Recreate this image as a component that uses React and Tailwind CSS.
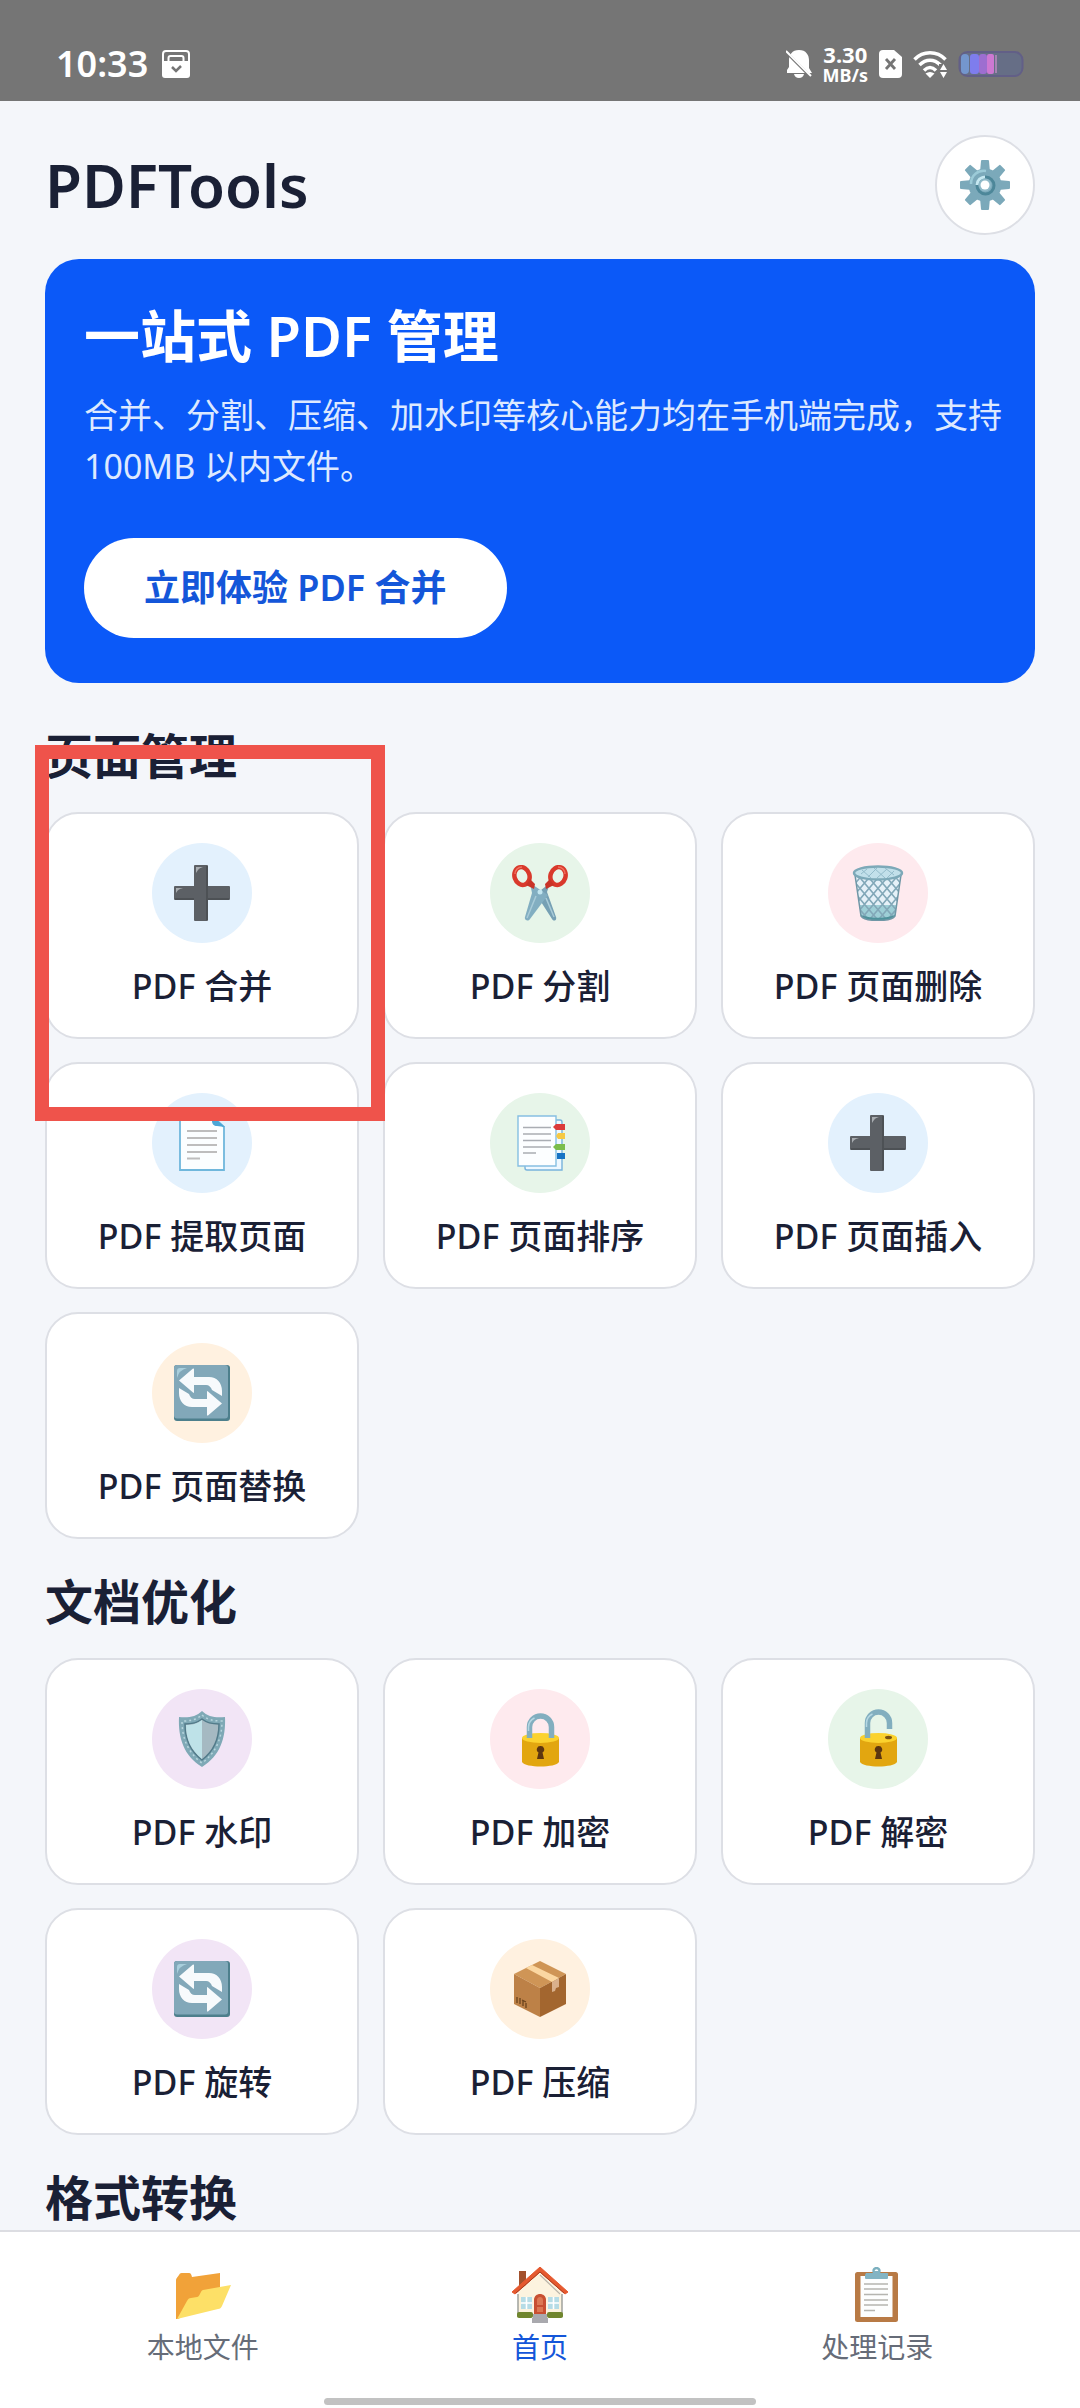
import React, { useState } from "react";

const PlusIcon = () => (
  <svg viewBox="0 0 56 56" className="size-14" aria-hidden="true">
    <path d="M21 0h12a1 1 0 0 1 1 1v20h21a1 1 0 0 1 1 1v12a1 1 0 0 1-1 1H34v20a1 1 0 0 1-1 1H21a1 1 0 0 1-1-1V35H1a1 1 0 0 1-1-1V22a1 1 0 0 1 1-1h19V1a1 1 0 0 1 1-1z" fill="#5c6065" />
    <path d="M33 1v54M1 34h19M34 34h21" stroke="#4d5155" strokeWidth="2" />
    <path d="M22 8V2h7c-4 1-5 3-7 6zM2 28v-5h7c-4 1-5 2-7 5z" fill="#a9adb1" />
  </svg>
);

const ScissorsIcon = () => (
  <svg viewBox="0 0 56 56" className="size-14" aria-hidden="true">
    <path d="M38 18 24 29 40 54c2 3 5 1 4-2L35 27z" fill="#76a0b4" />
    <path d="M18 18 36 30 18 54c-2 3-6 1-5-2l7-24z" fill="#82aec1" />
    <path d="M24 31 15 53M34 33l8 19" stroke="#a8cbd8" strokeWidth="1.500" />
    <g fill="none" stroke="#d9392c" strokeWidth="4.500">
      <ellipse cx="10" cy="11" rx="7.500" ry="9" transform="rotate(-18 10 11)" />
      <ellipse cx="46" cy="11" rx="7.500" ry="9" transform="rotate(18 46 11)" />
    </g>
    <path d="m14 20 8 4 1-5-5-5zM42 20l-8 4-1-5 5-5z" fill="#c93327" />
    <path d="M3 9c0-4 3-7 7-7M53 9c0-4-3-7-7-7" stroke="#f2705f" strokeWidth="1.500" fill="none" />
    <circle cx="28" cy="27" r="2.500" fill="#c3e6f0" />
  </svg>
);

const TrashIcon = () => (
  <svg viewBox="0 0 56 56" className="size-14" aria-hidden="true">
    <defs>
      <clipPath id="bin">
        <path d="M5 10 11 51c4 6 30 6 34 0l6-41z" />
      </clipPath>
    </defs>
    <path d="M5 10 11 51c4 6 30 6 34 0l6-41z" fill="#e5f1f8" />
    <g clipPath="url(#bin)">
      <path d="M8 40h40v18H8z" fill="#62b1b9" opacity="0.55" />
      <path
        d="M-30 8 14 60M-21 8 23 60M-12 8 32 60M-3 8 41 60M6 8 50 60M15 8 59 60M24 8 68 60M33 8 77 60M42 8 86 60M86 8 42 60M77 8 33 60M68 8 24 60M59 8 15 60M50 8 6 60M41 8-3 60M32 8-12 60M23 8-21 60M14 8-30 60"
        stroke="#82a8b8"
        strokeWidth="1.600"
      />
      <path d="M10 49c6 5 30 5 36 0v9H10z" fill="#4e929b" />
    </g>
    <path d="M5 10 11 51c4 6 30 6 34 0l6-41" fill="none" stroke="#7097a6" strokeWidth="1.500" />
    <ellipse cx="28" cy="8" rx="24" ry="6.500" fill="#c2e0ea" stroke="#7da9b8" strokeWidth="2.500" />
    <path d="M11 9 17 4M18 12 27 3M27 13 37 4M37 13 44 6M12 5l9 8M24 3l11 10M35 3l9 7" stroke="#94bccb" />
  </svg>
);

const PageIcon = () => (
  <svg viewBox="0 0 56 56" className="size-14" aria-hidden="true">
    <path d="M6 1h32l12 11v43H6z" fill="#fbfeff" stroke="#6fb7dc" strokeWidth="1.800" />
    <path d="M38 1v5c0 3 2 5 5 5l8 1z" fill="#4ba6d6" />
    <path d="M13 16h30M13 23h30M13 30h30M13 37h30M13 43.500h13" stroke="#bdbdbd" strokeWidth="1.800" />
  </svg>
);

const TabsIcon = () => (
  <svg viewBox="0 0 56 56" className="size-14" aria-hidden="true">
    <path d="M13 5h35q2 0 2 2v48H15q-2 0-2-2z" fill="#eef8ff" stroke="#78b3dc" strokeWidth="1.400" />
    <path d="M6 1h38v50H6z" fill="#fcfeff" stroke="#86bfe2" strokeWidth="1.400" />
    <path d="M11 12.500h28M11 19h28M11 25.500h28M11 32h28M11 38h13" stroke="#a9adb3" strokeWidth="1.400" />
    <path d="m41 12 3-3h9v6h-9z" fill="#db3b3b" />
    <path d="m44 21 2-3h7v6h-7z" fill="#f6c944" />
    <path d="m41 32 3-3h9v6h-9z" fill="#7bbd4b" />
    <path d="M45 38h8v6h-8z" fill="#1673c4" />
  </svg>
);

const swapArrow = "M5 15.500 19 3.500q1-.5 1 1V12h15c8 0 13 6 13 14v5L38 25c-1-3-3-5-6-5H20v7q0 1.500-1 .5z";

const SwapIcon = () => (
  <svg viewBox="0 0 56 56" className="size-14" aria-hidden="true">
    <rect width="56" height="56" rx="3" fill="#4d7f8c" />
    <rect width="54" height="53.500" rx="3" fill="#82a8b9" />
    <path d="M3 13V6q0-3 3-3h7Q5 5 3 13z" fill="#a9cfdc" />
    <path d={swapArrow} fill="#f7fafc" />
    <path d={swapArrow} fill="#f7fafc" transform="rotate(180 26.500 27)" />
  </svg>
);

const ShieldIcon = () => (
  <svg viewBox="0 0 56 56" className="size-14" aria-hidden="true">
    <path d="M28 0c6 6 14 7 23 6 1 21-5 39-23 50C10 45 4 27 5 6c9 1 17 0 23-6z" fill="#7fa9b6" />
    <path d="M28 4c6 5 12 6 20 6 0 17-6 32-20 42C14 42 8 27 8 10c8 0 14-1 20-6z" fill="none" stroke="#b7d5dd" strokeWidth="1.500" strokeDasharray="2 3" />
    <path d="M28 8c5 4 11 5 17 5 0 15-5 27-17 36C16 40 11 28 11 13c6 0 12-1 17-5z" fill="#a5b9c2" stroke="#527b8a" strokeWidth="1.500" />
    <path d="M28 9c-5 4-10 5-16 5 0 14 5 25 16 34z" fill="#bee2e8" />
  </svg>
);

const LockIcon = ({ open }) => (
  <svg viewBox="0 0 56 56" className="size-14 overflow-visible" aria-hidden="true">
    <path d="M10 27v24c3 6 34 6 37 0V27z" fill="#e2a610" />
    <ellipse cx="28.500" cy="27" rx="18.500" ry="5" fill="#fbd22e" />
    {open ? (
      <>
        <ellipse cx="38.500" cy="26.500" rx="3.500" ry="1.800" fill="#7a5210" />
        <path d="M17.500 27V12a11 11 0 0 1 22 0v6" fill="none" stroke="#82aebf" strokeWidth="5.500" />
        <path d="M16.500 16v-4c0-4 2-7 6-9" fill="none" stroke="#b5d7e3" strokeWidth="1.500" />
      </>
    ) : (
      <>
        <path d="M17.500 27V16a11 11 0 0 1 22 0v11" fill="none" stroke="#82aebf" strokeWidth="5.500" />
        <path d="M16.500 20v-4c0-4 2-7 6-9" fill="none" stroke="#b5d7e3" strokeWidth="1.500" />
      </>
    )}
    <path d="M28.500 35a3.500 3.500 0 0 1 2 6.500L32 48h-7l1.500-6.500a3.500 3.500 0 0 1 2-6.500z" fill="#5c3510" />
  </svg>
);

const PackageIcon = () => (
  <svg viewBox="0 0 56 56" className="size-14" aria-hidden="true">
    <path d="M28 0 54 13 28 27 2 13z" fill="#cf9556" />
    <path d="M2 13 28 27v29L2 43z" fill="#bd8147" />
    <path d="M54 13 28 27v29l26-13z" fill="#a3662f" />
    <path d="m14 7 6-3 27 13-7 4z" fill="#fbd7a1" />
    <path d="m40 21 7-4v9l-3 1-1 3-3 1z" fill="#d9b08c" />
    <path d="M5 36v6M8 37v6M11 40v5M10 39l4 2M14 42v5" stroke="#6b421c" strokeWidth="1.300" />
  </svg>
);

const FolderIcon = () => (
  <svg viewBox="0 0 56 56" className="size-14" aria-hidden="true">
    <path d="M1 52V13c0-2 2-3 3-5s2-2 4-2h6c2 0 2 1 3 4l28-4v22L3 52z" fill="#f1a239" />
    <path d="m2 52 10-18c1-2 2-3 4-3l6-1c3 0 3-6 6-7l28-5-9 21c-1 2-2 3-4 3z" fill="#fde067" />
  </svg>
);

const HouseIcon = () => (
  <svg viewBox="0 0 56 56" className="size-14" aria-hidden="true">
    <path d="M7 4h7v17H7z" fill="#a2512d" />
    <path d="M6 25 28 5l22 20v25H6z" fill="#fcf3df" />
    <path d="M6 27v23M50 27v23" stroke="#9a9c97" strokeWidth="1.400" />
    <path d="m28 8 20 19" stroke="#b9b4aa" strokeWidth="1.200" />
    <path d="M28 0 56 25l-3 2L28 5 3 27l-3-2z" fill="#e5592f" stroke="#e5592f" strokeLinejoin="round" />
    <path d="M4 26 28 5l24 21" fill="none" stroke="#a83c1e" />
    <path d="M22 47V33c0-8 12-8 12 0v14z" fill="#c84f31" />
    <path d="M25 38v-5c0-4 6-4 6 0v5zM25 40h6v5h-6z" fill="#dc7854" />
    <path d="M9 30h11v12H9zM36 30h11v12H36z" fill="#b5dce6" />
    <path d="M14.500 30v12M9 36h11M41.500 30v12M36 36h11" stroke="#fff" strokeWidth="1.600" />
    <rect x="5" y="45" width="16" height="6" rx="2" fill="#70862e" />
    <rect x="35" y="45" width="16" height="6" rx="2" fill="#70862e" />
    <path d="M21 47h14v4h1v5H20v-5h1z" fill="#a9a9ae" />
  </svg>
);

const ClipboardIcon = () => (
  <svg viewBox="0 0 56 56" className="size-14" aria-hidden="true">
    <rect x="6" y="5" width="43" height="50" rx="2.500" fill="#b87a45" />
    <path d="M11.500 9h32v41h-32z" fill="#fdfefe" />
    <circle cx="27.500" cy="4" r="3" fill="none" stroke="#7cb0bf" strokeWidth="2.400" />
    <path d="M17 6h7l1-2h5l1 2h7q2 0 1 2v3q0 1-1 1H17q-1 0-1-1V8z" fill="#83b4c3" />
    <path d="M15 17h24M15 22h24M15 27.500h24M15 33h24M15 38h24M15 43.500h11" stroke="#b5b5b0" strokeWidth="1.400" />
  </svg>
);

const GearIcon = () => (
  <svg viewBox="0 0 50 50" className="size-[50px]" aria-hidden="true">
    {[0, 45, 90, 135, 180, 225, 270, 315].map((deg) => (
      <path key={deg} d="M21 1q0-1 1-1h6q1 0 1 1l1 11H20z" fill="#7ba9ba" transform={`rotate(${deg} 25 25)`} />
    ))}
    <circle cx="25" cy="25" r="16.500" fill="#7ba9ba" />
    <path d="M11 24c0-9 7-14 15-13" fill="none" stroke="#9ccbd8" strokeWidth="2.500" />
    <circle cx="25.500" cy="25.500" r="8.500" fill="none" stroke="#4d8799" strokeWidth="3" />
    <path d="M17 25c0-5 4-8 8-8" fill="none" stroke="#c6e8f1" strokeWidth="3" />
    <circle cx="25" cy="25" r="6.500" fill="#8fb9c8" />
    <circle cx="25" cy="25" r="4.500" fill="#fff" />
  </svg>
);

const sections = [
  {
    title: "页面管理",
    marked: true,
    tools: [
      { name: "PDF 合并", tint: "bg-[#e3f1fd]", icon: <PlusIcon /> },
      { name: "PDF 分割", tint: "bg-[#e7f5e9]", icon: <ScissorsIcon /> },
      { name: "PDF 页面删除", tint: "bg-[#feeaee]", icon: <TrashIcon /> },
      { name: "PDF 提取页面", tint: "bg-[#e3f1fd]", icon: <PageIcon /> },
      { name: "PDF 页面排序", tint: "bg-[#e7f5e9]", icon: <TabsIcon /> },
      { name: "PDF 页面插入", tint: "bg-[#e3f1fd]", icon: <PlusIcon /> },
      { name: "PDF 页面替换", tint: "bg-[#fff1e0]", icon: <SwapIcon /> },
    ],
  },
  {
    title: "文档优化",
    tools: [
      { name: "PDF 水印", tint: "bg-[#f2e5f6]", icon: <ShieldIcon /> },
      { name: "PDF 加密", tint: "bg-[#feeaee]", icon: <LockIcon /> },
      { name: "PDF 解密", tint: "bg-[#e7f5e9]", icon: <LockIcon open /> },
      { name: "PDF 旋转", tint: "bg-[#f2e5f6]", icon: <SwapIcon /> },
      { name: "PDF 压缩", tint: "bg-[#fff1e0]", icon: <PackageIcon /> },
    ],
  },
  { title: "格式转换", tools: [] },
];

const tabs = [
  { id: "files", label: "本地文件", icon: <FolderIcon /> },
  { id: "home", label: "首页", icon: <HouseIcon /> },
  { id: "history", label: "处理记录", icon: <ClipboardIcon /> },
];

function StatusBar() {
  return (
    <div className="flex h-[101px] items-center justify-between bg-[#757575] px-14 pt-[27px] text-white">
      <div className="flex items-center gap-[14px]">
        <span className="text-[36px] leading-[40px] font-semibold">10:33</span>
        <svg viewBox="0 0 28 28" className="size-7" aria-hidden="true">
          <path d="M4 1h20q3 0 3 3v8H1V4q0-3 3-3z" fill="none" stroke="#fff" strokeWidth="2" />
          <path d="M6.500 12V8q0-2 2-2h11q2 0 2 2v4" fill="none" stroke="#fff" strokeWidth="2" />
          <path d="M0 11h28v14q0 3-3 3H3q-3 0-3-3z" fill="#fff" />
          <path d="m10 17 4 4 5-5" fill="none" stroke="#757575" strokeWidth="2.500" />
        </svg>
      </div>
      <div className="flex items-center gap-[11px]">
        <svg viewBox="0 0 26 28" className="h-7 w-[26px]" aria-hidden="true">
          <path d="M13 0c7 0 10 5 10 10v8l3 5H1v-3l2-3v-7C3 5 6 0 13 0z" fill="#fff" />
          <path d="M8 24h10q-1 4-5 4t-5-4z" fill="#fff" />
          <path d="M-2 0 26 28" stroke="#757575" strokeWidth="3" />
          <path d="M0 1 25 26" stroke="#fff" strokeWidth="2" />
        </svg>
        <div className="flex flex-col items-center font-bold">
          <span className="text-[22px] leading-[22px]">3.30</span>
          <span className="text-[18px] leading-[20px]">MB/s</span>
        </div>
        <svg viewBox="0 0 23 28" className="h-7 w-[23px]" aria-hidden="true">
          <path d="M4 0h11l8 7v17q0 4-4 4H4q-4 0-4-4V4q0-4 4-4z" fill="#fff" />
          <path d="m7 9 9 10M16 9 7 19" stroke="#757575" strokeWidth="2.800" />
        </svg>
        <svg viewBox="0 0 34 28" className="h-7 w-[34px]" aria-hidden="true">
          <path d="M1.500 9.500C10 .5 24 .5 32.500 9.500M6.500 15C13 8.500 21 8.500 27.500 15M11 20.500c4-4 8-4 12 0" fill="none" stroke="#fff" strokeWidth="3.500" />
          <path d="M12.500 23.500q4.500-3 9 0L17 28z" fill="#fff" />
          <path d="M26 14h8v14h-8z" fill="#757575" />
          <path d="m30.500 14 3.500 6h-7zM30.500 28l3.500-6h-7z" fill="#fff" />
        </svg>
        <svg viewBox="0 0 66 28" className="h-7 w-[66px]" aria-hidden="true">
          <rect x="1.500" y="2" width="63" height="24" rx="8" fill="#666e86" stroke="#625f87" strokeWidth="2" />
          <rect x="3" y="4" width="8" height="20" rx="4" fill="#7496cd" />
          <rect x="12" y="4" width="9" height="20" rx="3" fill="#7e7ded" />
          <rect x="21" y="4" width="8" height="20" rx="3" fill="#9d6ed0" />
          <rect x="29" y="4" width="7" height="20" rx="2" fill="#cd78d2" />
          <path d="M38 5v18" stroke="#bd8bc0" strokeWidth="1.500" />
        </svg>
      </div>
    </div>
  );
}

function ToolCard({ tool }) {
  return (
    <button
      type="button"
      className="flex flex-col items-center rounded-[33px] border-2 border-[#dddfe5] bg-white pt-[29px] pb-7"
    >
      <span className={`flex size-[100px] items-center justify-center rounded-full ${tool.tint}`}>{tool.icon}</span>
      <span className="mt-5 text-[34px] leading-[46px] font-medium">{tool.name}</span>
    </button>
  );
}

function App() {
  const [activeTab, setActiveTab] = useState("home");

  return (
    <div className="flex min-h-screen flex-col bg-[#f4f6fa] font-['Noto_Sans','Noto_Sans_CJK_SC',sans-serif] text-[#1a2035]" lang="zh-CN">
      <StatusBar />

      <main className="flex-1 px-[45px]">
        <header className="flex items-center justify-between pt-[34px] pb-6">
          <h1 className="text-[60px] leading-[72px] font-semibold">PDFTools</h1>
          <button
            type="button"
            aria-label="设置"
            className="flex size-[100px] items-center justify-center rounded-full border-2 border-[#dddfe5] bg-white"
          >
            <GearIcon />
          </button>
        </header>

        <div className="mb-[41px] rounded-[34px] bg-[#0b59f8] pt-[37px] pr-8 pb-[45px] pl-[39px]">
          <h2 className="text-[56px] leading-[78px] font-semibold text-white">一站式 PDF 管理</h2>
          <p className="mt-4 text-[34px] leading-[51px] text-[#dde9ff]">
            合并、分割、压缩、加水印等核心能力均在手机端完成，支持 100MB 以内文件。
          </p>
          <button
            type="button"
            className="mt-[46px] h-[100px] rounded-full bg-white px-[60px] text-[36px] leading-[50px] font-semibold text-[#1456d9]"
          >
            立即体验 PDF 合并
          </button>
        </div>

        <div className="flex flex-col gap-[31px]">
          {sections.map((section) => (
            <section key={section.title} className="relative">
              <h2 className="text-[48px] leading-[64px] font-semibold">{section.title}</h2>
              {section.tools.length > 0 && (
                <div className="mt-6 grid grid-cols-3 gap-x-6 gap-y-[23px]">
                  {section.tools.map((tool) => (
                    <ToolCard key={tool.name} tool={tool} />
                  ))}
                </div>
              )}
              {/* highlight frame round the first tool */}
              {section.marked && (
                <div className="pointer-events-none absolute top-[21px] -left-[10px] h-[376px] w-[350px] border-[14px] border-[#ef534b]" />
              )}
            </section>
          ))}
        </div>
      </main>

      <nav className="border-t-2 border-[#dcdde2] bg-white pt-[35px] pb-[3px]">
        <div className="grid grid-cols-3 px-[34px]">
          {tabs.map((tab) => (
            <a
              key={tab.id}
              href={`#${tab.id}`}
              onClick={() => setActiveTab(tab.id)}
              className={`flex flex-col items-center gap-[6px] text-[28px] leading-[36px] ${
                activeTab === tab.id ? "text-[#1456d9]" : "text-[#666c78]"
              }`}
            >
              {tab.icon}
              <span>{tab.label}</span>
            </a>
          ))}
        </div>
        <div className="mx-auto mt-[33px] h-[7px] w-2/5 rounded-full bg-[#c2c2c2]" />
      </nav>
    </div>
  );
}

export default App;
